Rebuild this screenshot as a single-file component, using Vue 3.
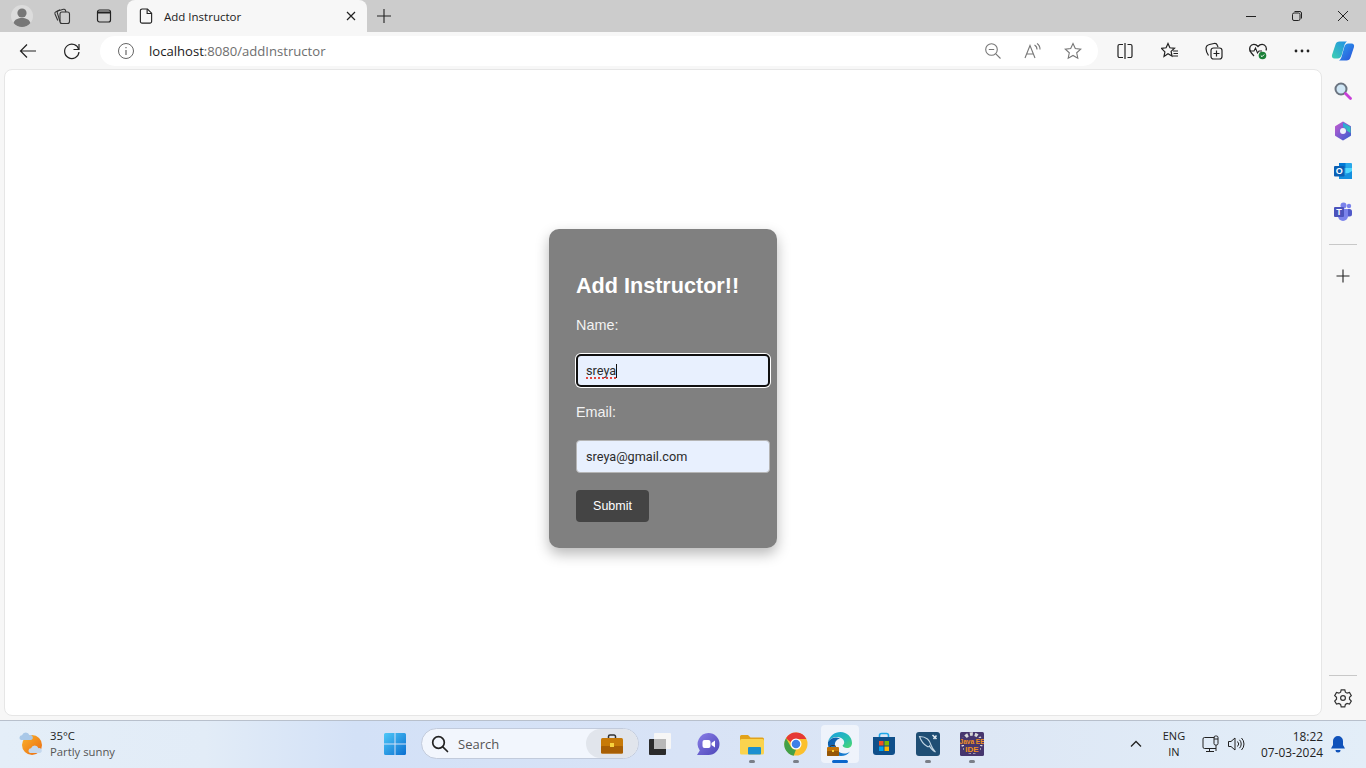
<template>
  <div class="desktop">
    <header class="tabstrip">
      <div class="slot avatar-slot">
        <svg width="24" height="24" viewBox="0 0 24 24">
          <circle cx="12" cy="12" r="11" fill="#dcdcdc" />
          <circle cx="12" cy="9" r="4.6" fill="#777" />
          <path d="M3.6 19c1-3.600 4.400-5 8.400-5s7.400 1.400 8.400 5a11 11 0 0 1-16.800 0z" fill="#777" />
        </svg>
      </div>
      <div class="slot">
        <svg width="20" height="20" viewBox="0 0 20 20" fill="none" stroke="#333" stroke-width="1.100">
          <rect x="8" y="6" width="9.500" height="11.500" rx="2" />
          <path d="M8 15.500 5.300 6.800c-.3-1 .2-1.800 1.200-2.100L11.500 3.300c.9-.2 1.600.2 1.900 1L14 6" />
          <path d="M5.800 14.500 3 8c-.4-1 0-1.800.9-2.200L8 3.800" />
        </svg>
      </div>
      <div class="slot tabs-toggle">
        <svg width="20" height="20" viewBox="0 0 20 20" fill="none" stroke="#222" stroke-width="1.200">
          <rect x="3.500" y="4" width="13" height="12" rx="2" />
          <path d="M3.500 6.500h13" stroke-width="2" />
        </svg>
      </div>
      <div class="tab">
        <svg width="18" height="18" viewBox="0 0 16 16" fill="none" stroke="#222" stroke-width="1">
          <path d="M4.500 1.800h4.800L13 5.500v7.300a1.500 1.500 0 0 1-1.500 1.500h-7A1.500 1.500 0 0 1 3 12.800V3.300a1.500 1.500 0 0 1 1.500-1.500z" />
          <path d="M9 2v3.800h4" />
        </svg>
        <span class="tab-title">Add Instructor</span>
        <svg class="tab-close" width="12" height="12" viewBox="0 0 12 12" stroke="#222" stroke-width="1.200">
          <path d="M2 2l8 8M10 2l-8 8" />
        </svg>
      </div>
      <div class="slot new-tab">
        <svg width="16" height="16" viewBox="0 0 16 16" stroke="#222" stroke-width="1.100">
          <path d="M8 1v14M1 8h14" />
        </svg>
      </div>
      <div class="window-buttons">
        <div class="win-btn">
          <svg width="12" height="12" viewBox="0 0 12 12" stroke="#222"><path d="M1 6.500h10" /></svg>
        </div>
        <div class="win-btn">
          <svg width="12" height="12" viewBox="0 0 12 12" fill="none" stroke="#222">
            <rect x="1.500" y="3" width="7.500" height="7.500" rx="1.500" />
            <path d="M3.500 1.500h5.500a1.800 1.800 0 0 1 1.500 1.500v5.500" />
          </svg>
        </div>
        <div class="win-btn">
          <svg width="12" height="12" viewBox="0 0 12 12" stroke="#222"><path d="M1 1l10 10M11 1L1 11" /></svg>
        </div>
      </div>
    </header>

    <nav class="toolbar">
      <div class="tool">
        <svg width="20" height="20" viewBox="0 0 20 20" fill="none" stroke="#222" stroke-width="1.200">
          <path d="M2.500 10h15.500M9 3.500 2.500 10 9 16.500" />
        </svg>
      </div>
      <div class="tool">
        <svg width="20" height="20" viewBox="0 0 20 20" fill="none" stroke="#222" stroke-width="1.200">
          <path d="M16.800 8.500A7.200 7.200 0 1 0 17 11" />
          <path d="M17 3v5.500h-5.500" />
        </svg>
      </div>
      <div class="address">
        <svg class="info" width="18" height="18" viewBox="0 0 18 18" fill="none" stroke="#666" stroke-width="1">
          <circle cx="9" cy="9" r="7.500" />
          <path d="M9 8v5M9 5v1.300" stroke-width="1.200" />
        </svg>
        <span class="url"><b>localhost</b>:8080/addInstructor</span>
        <div class="address-tools">
          <div class="addr-tool">
            <svg width="18" height="18" viewBox="0 0 18 18" fill="none" stroke="#777" stroke-width="1.100">
              <circle cx="7.500" cy="7.500" r="5.800" />
              <path d="M4.800 7.500h5.400M11.800 11.800 16.500 16.500" />
            </svg>
          </div>
          <div class="addr-tool">
            <svg width="18" height="18" viewBox="0 0 18 18" fill="none" stroke="#777" stroke-width="1.100">
              <path d="M1 16 6 3.500 11 16M2.800 12h6.400" />
              <path d="M10.500 3a5 5 0 0 1 2.500 4.500M13 1.500a7 7 0 0 1 3 6" />
            </svg>
          </div>
          <div class="addr-tool">
            <svg width="18" height="18" viewBox="0 0 18 18" fill="none" stroke="#777" stroke-width="1.100">
              <path d="M9 1.500l2.300 5 5.400.6-4 3.700 1.100 5.400L9 13.500l-4.800 2.700 1.100-5.400-4-3.700 5.400-.6z" />
            </svg>
          </div>
        </div>
      </div>
      <div class="tool split">
        <svg width="18" height="18" viewBox="0 0 18 18" fill="none" stroke="#222" stroke-width="1.200">
          <path d="M7 2.500H3.500A1.500 1.500 0 0 0 2 4v10a1.500 1.500 0 0 0 1.500 1.500H7M9 1v16M11.500 2.500h3A1.500 1.500 0 0 1 16 4v10a1.500 1.500 0 0 1-1.500 1.500h-3" />
        </svg>
      </div>
      <div class="tool favorites">
        <svg width="18" height="18" viewBox="0 0 18 18" fill="none" stroke="#222" stroke-width="1.200">
          <path d="M7 1.500l1.900 4.300 4.600.5-3.400 3.100.9 4.600L7 11.800l-4 2.700.9-4.600L.5 6.300l4.600-.5z" />
          <path d="M12 9h5M12.500 11.500H17M11.500 14H17" />
        </svg>
      </div>
      <div class="tool">
        <svg width="18" height="18" viewBox="0 0 18 18" fill="none" stroke="#222" stroke-width="1.200">
          <path d="M3.500 13.500C1.800 11 1 8.500 1 6.500 1 4.500 2.300 3 4.500 2.500L9 1.500c1.500-.3 2.800.3 3.300 1.800L13 5" />
          <rect x="6" y="6" width="11" height="11" rx="2.500" />
          <path d="M11.500 8.500v6M8.500 11.500h6" />
        </svg>
      </div>
      <div class="tool">
        <svg width="20" height="20" viewBox="0 0 20 20" fill="none">
          <path d="M6 15 3 11.500C1.500 9.500 1.200 7.500 2.200 5.500 3.700 3 7.500 2.500 10 5.500c2.500-3 6.300-2.500 7.800 0 .7 1.400.7 2.800.2 4" stroke="#222" stroke-width="1.200" />
          <path d="M1.500 10H6l1.500-3 2 5 1.500-2h3" stroke="#222" stroke-width="1.100" />
          <circle cx="14.500" cy="14.500" r="3.800" fill="#1a7f37" />
          <path d="M12.800 14.500l1.200 1.200 2.200-2.200" stroke="#fff" stroke-width="1" />
        </svg>
      </div>
      <div class="tool">
        <svg width="16" height="4" viewBox="0 0 16 4" fill="#222">
          <circle cx="2" cy="2" r="1.400" /><circle cx="8" cy="2" r="1.400" /><circle cx="14" cy="2" r="1.400" />
        </svg>
      </div>
      <div class="copilot-slot">
        <svg width="24" height="24" viewBox="0 0 24 24">
          <defs>
            <linearGradient id="cpA" x1="0" y1="1" x2="1" y2="0">
              <stop offset="0" stop-color="#3fd0b0" />
              <stop offset="1" stop-color="#1f8fe6" />
            </linearGradient>
            <linearGradient id="cpB" x1="0" y1="0" x2="1" y2="1">
              <stop offset="0" stop-color="#2aa3f0" />
              <stop offset="1" stop-color="#2b4fd8" />
            </linearGradient>
          </defs>
          <path d="M8.500 2.500h7.500c-1.500 1-2.200 2.500-2.800 4.500l-2.500 9c-.6 2-1.900 3.400-4 3.400H3.500C1.500 19.400.5 18 1 16L4.500 5.500C5 3.500 6.500 2.500 8.500 2.500z" fill="url(#cpA)" />
          <path d="M15.500 21.500H8c1.500-1 2.200-2.500 2.800-4.500l2.500-9c.6-2 1.900-3.400 4-3.400h3.200c2 0 3 1.400 2.500 3.400L19.500 18.500c-.5 2-2 3-4 3z" fill="url(#cpB)" />
        </svg>
      </div>
    </nav>

    <div class="content-row">
      <main class="page">
        <section class="form-card">
          <h2>Add Instructor!!</h2>
          <form @submit.prevent>
            <label for="name">Name:</label>
            <div class="field focused">
              <input id="name" v-model="name" type="text" />
              <i class="squiggle"></i>
              <i class="caret"></i>
            </div>
            <label for="email">Email:</label>
            <div class="field">
              <input id="email" v-model="email" type="email" />
            </div>
            <button type="submit">Submit</button>
          </form>
        </section>
      </main>
      <aside class="sidebar">
        <div class="side-item">
          <svg width="20" height="20" viewBox="0 0 20 20" fill="none">
            <circle cx="8" cy="8" r="5.500" fill="#cfe6f5" stroke="#6b7480" stroke-width="2" />
            <path d="M12.500 12.500 17.500 17.500" stroke="#c83fd8" stroke-width="2.800" stroke-linecap="round" />
          </svg>
        </div>
        <div class="side-item">
          <svg width="20" height="20" viewBox="0 0 20 20">
            <defs>
              <linearGradient id="msA" x1="0" y1="0" x2="1" y2="1">
                <stop offset="0" stop-color="#c05ad0" />
                <stop offset="1" stop-color="#3a5fd0" />
              </linearGradient>
              <linearGradient id="msB" x1="0" y1="0" x2="1" y2="1">
                <stop offset="0" stop-color="#2a9fe0" />
                <stop offset="1" stop-color="#35d0b0" />
              </linearGradient>
            </defs>
            <path d="M10 1.500 17 5.800v8.400L10 18.500 3 14.200V5.800z" fill="url(#msA)" stroke="url(#msA)" stroke-linejoin="round" stroke-width="2" />
            <path d="M10 1.500 17.500 6v6l-4-2.500V8L10 6z" fill="url(#msB)" />
            <circle cx="10" cy="10" r="3" fill="#eef2fc" />
          </svg>
        </div>
        <div class="side-item">
          <svg width="20" height="20" viewBox="0 0 20 20">
            <rect x="6" y="2" width="13" height="16" rx="1" fill="#28a8ea" />
            <rect x="6" y="2" width="6.500" height="5" fill="#0078d4" />
            <rect x="12.500" y="7" width="6.500" height="5" fill="#50d9ff" />
            <path d="M6 11l6.500 3 6.500-4v8H6z" fill="#1490df" />
            <rect x="1" y="5" width="10.500" height="10.500" rx="1" fill="#0a5fb4" />
            <text x="6.200" y="13.400" class="svg-letter" text-anchor="middle" fill="#fff" font-size="9">O</text>
          </svg>
        </div>
        <div class="side-item">
          <svg width="20" height="20" viewBox="0 0 20 20">
            <circle cx="16" cy="5" r="2.200" fill="#7b83eb" />
            <rect x="12.500" y="8" width="6.500" height="7.500" rx="2.500" fill="#5059c9" />
            <circle cx="10.500" cy="4.500" r="3" fill="#7b83eb" />
            <path d="M5 8h10v7a5 5 0 0 1-10 0z" fill="#7b83eb" />
            <rect x="1" y="6" width="10" height="10" rx="1" fill="#4b53bc" />
            <text x="6" y="14.200" class="svg-letter" text-anchor="middle" fill="#fff" font-size="9">T</text>
          </svg>
        </div>
        <hr class="side-rule first" />
        <div class="side-item plus">
          <svg width="14" height="14" viewBox="0 0 14 14" stroke="#222" stroke-width="1.100">
            <path d="M7 .5v13M.5 7h13" />
          </svg>
        </div>
        <hr class="side-rule last" />
        <div class="side-item">
          <svg width="20" height="20" viewBox="0 0 20 20" fill="none" stroke="#333" stroke-width="1.200">
            <path d="M8.200 2h3.600l.6 2.400 1.700 1 2.400-.7 1.800 3.100-1.800 1.700v2l1.800 1.700-1.800 3.100-2.400-.7-1.700 1-.6 2.400H8.200l-.6-2.400-1.700-1-2.400.7-1.800-3.100 1.800-1.700v-2L1.700 7.800l1.800-3.100 2.400.7 1.700-1z" transform="translate(0 -.2)" />
            <circle cx="10" cy="10" r="2.400" />
          </svg>
        </div>
      </aside>
    </div>

    <footer class="taskbar">
      <div class="weather">
        <svg width="28" height="28" viewBox="0 0 28 28">
          <defs>
            <linearGradient id="sun" x1="0" y1="0" x2="1" y2="1">
              <stop offset="0" stop-color="#fbb32a" />
              <stop offset="1" stop-color="#ea6a12" />
            </linearGradient>
          </defs>
          <circle cx="15" cy="15" r="10" fill="url(#sun)" />
          <path d="M4 10a2.500 2.500 0 0 1 1-4.800 4 4 0 0 1 7.500 0A2.500 2.500 0 0 1 14 10z" fill="#a9c8e8" />
          <path d="M13 23a2.500 2.500 0 0 1 1-4.800 4 4 0 0 1 7.500 0A2.500 2.500 0 0 1 23 23z" fill="#c4d8ee" />
        </svg>
        <div class="weather-text">
          <span class="temp">35°C</span>
          <span class="sky">Partly sunny</span>
        </div>
      </div>

      <div class="task-slot">
        <svg width="24" height="24" viewBox="0 0 24 24">
          <defs>
            <linearGradient id="win" x1="0" y1="0" x2="1" y2="1">
              <stop offset="0" stop-color="#4fc8f8" />
              <stop offset="1" stop-color="#0a6fd0" />
            </linearGradient>
          </defs>
          <path d="M1 2.500A1.500 1.500 0 0 1 2.500 1h9v10.500H1zM12.500 1h9A1.500 1.500 0 0 1 23 2.500v9H12.500zM1 12.500h10.500V23h-9A1.500 1.500 0 0 1 1 21.500zM12.500 12.500H23v9a1.500 1.500 0 0 1-1.500 1.500h-9z" fill="url(#win)" />
        </svg>
      </div>
      <div class="searchbox">
        <svg width="20" height="20" viewBox="0 0 20 20" fill="none" stroke="#222" stroke-width="1.700">
          <circle cx="8.500" cy="8.500" r="5.800" />
          <path d="M12.800 12.800 17.500 17.500" stroke-linecap="round" />
        </svg>
        <span>Search</span>
        <div class="search-badge">
          <svg width="24" height="20" viewBox="0 0 24 20">
            <path d="M8.500 5V2.500A1.500 1.500 0 0 1 10 1h4a1.500 1.500 0 0 1 1.500 1.500V5" fill="none" stroke="#333" stroke-width="1.500" />
            <rect x="1" y="4" width="22" height="15.500" rx="1.500" fill="#c77a08" />
            <rect x="1" y="12" width="22" height="7.500" rx="1" fill="#a85f05" />
            <rect x="10" y="9" width="4" height="4" fill="#f7d23e" />
          </svg>
        </div>
      </div>
      <div class="task-slot taskview">
        <svg width="24" height="24" viewBox="0 0 24 24">
          <rect x="6" y="1" width="17" height="16" rx="1" fill="#f6f6f6" />
          <rect x="1" y="7" width="17" height="16" rx="1" fill="#2b2b2b" />
          <rect x="6" y="7" width="12" height="10" fill="#b8b8b8" />
        </svg>
      </div>
      <div class="task-slot meet">
        <svg width="24" height="24" viewBox="0 0 24 24">
          <defs>
            <linearGradient id="meet" x1="0" y1="0" x2="1" y2="1">
              <stop offset="0" stop-color="#8a7fe8" />
              <stop offset="1" stop-color="#4d46b8" />
            </linearGradient>
          </defs>
          <path d="M12.500 1a11 11 0 0 1 0 22H1l2.800-4.500A11 11 0 0 1 12.500 1z" fill="url(#meet)" />
          <rect x="6.500" y="8" width="8" height="8" rx="2" fill="#fff" />
          <path d="M15.500 11 19 8.500v7L15.500 13z" fill="#fff" />
        </svg>
      </div>
      <div class="task-slot running">
        <svg width="24" height="24" viewBox="0 0 24 24">
          <path d="M0 4.500A1.500 1.500 0 0 1 1.500 3h6.500l2.500 2.500H22.500A1.500 1.500 0 0 1 24 7v3H0z" fill="#e2a21a" />
          <rect x="0" y="7" width="24" height="15.500" rx="1.500" fill="#fad34e" />
          <rect x="8" y="15" width="13" height="7.500" rx="1" fill="#1b8fd0" />
        </svg>
      </div>
      <div class="task-slot running">
        <svg width="24" height="24" viewBox="0 0 24 24">
          <circle cx="12" cy="12" r="11.500" fill="#fbc02d" />
          <path d="M2 6.200A11.500 11.500 0 0 1 22.400 7H12a5.200 5.200 0 0 0-5 3.600z" fill="#e53935" />
          <path d="M2 6.200 7 15a5.500 5.500 0 0 0 5 2.500l-2.300 6.200A11.500 11.500 0 0 1 2 6.200z" fill="#43a047" />
          <circle cx="12" cy="12" r="5.500" fill="#fff" />
          <circle cx="12" cy="12" r="4.300" fill="#3f7fe8" />
        </svg>
      </div>
      <div class="task-slot active">
        <svg width="26" height="26" viewBox="0 0 26 26">
          <defs>
            <linearGradient id="edgeA" x1="0" y1="0" x2="1" y2="1">
              <stop offset="0" stop-color="#1b9de2" />
              <stop offset="0.6" stop-color="#26c0b0" />
              <stop offset="1" stop-color="#50d868" />
            </linearGradient>
            <linearGradient id="edgeB" x1="0" y1="0" x2="1" y2="1">
              <stop offset="0" stop-color="#0c59a4" />
              <stop offset="1" stop-color="#1b84d8" />
            </linearGradient>
          </defs>
          <path d="M1 11C2.500 5 7.500 1 13.500 1 20 1 25 6 25 12c0 3-2 5-5 5-2.500 0-4-1-4.500-2.500 2-1 2.500-4.500 0-6.500C11 4.500 4 6 1 11z" fill="url(#edgeA)" />
          <path d="M1 11c3-4.500 8.500-5.500 12-3.500-4 1-5.500 4-5 7.500.5 4 4 7 9 7.500 2 .2 4-.5 6-2-2 3-5.500 4.500-9 4.500C6 25 0 18 1 11z" fill="url(#edgeB)" />
          <path d="M3.500 17v-1.500a1 1 0 0 1 1-1h3a1 1 0 0 1 1 1V17" fill="none" stroke="#333" stroke-width="1" />
          <rect x="0" y="16" width="12" height="9" rx="1" fill="#c07208" />
          <rect x="0" y="20" width="12" height="5" rx="1" fill="#965706" />
          <rect x="5" y="19" width="2" height="2" fill="#f7d23e" />
        </svg>
      </div>
      <div class="task-slot">
        <svg width="24" height="24" viewBox="0 0 24 24">
          <path d="M7.500 6V3.500A2 2 0 0 1 9.500 1.500h5a2 2 0 0 1 2 2V6" fill="none" stroke="#1ea7e8" stroke-width="1.600" />
          <path d="M1 5h22v15a3 3 0 0 1-3 3H4a3 3 0 0 1-3-3z" fill="#0f4f8a" />
          <rect x="7" y="9" width="4.500" height="4.500" fill="#f25022" />
          <rect x="12.500" y="9" width="4.500" height="4.500" fill="#7fba00" />
          <rect x="7" y="14.500" width="4.500" height="4.500" fill="#00a4ef" />
          <rect x="12.500" y="14.500" width="4.500" height="4.500" fill="#ffb900" />
        </svg>
      </div>
      <div class="task-slot running">
        <svg width="24" height="24" viewBox="0 0 24 24">
          <rect width="24" height="24" rx="3" fill="#1f4e74" />
          <path d="M3.500 4.500c3.500 0 6 .8 8 2.500 2 1.700 3 4 3.700 6.500.6 2 2 4 4.300 6.500-2.700-1.500-5-3.500-6-6-.5 1-1.500 1-2.500.3C8 12.500 5 9 3.500 4.500z" fill="none" stroke="#c0d4e2" stroke-width="1.100" />
          <path d="M16.500 3l4 4M20.500 3.500 17.500 7" stroke="#dfe9f0" stroke-width="1.500" />
        </svg>
      </div>
      <div class="task-slot running">
        <svg width="24" height="24" viewBox="0 0 24 24">
          <rect width="24" height="24" rx="1.500" fill="#46366e" />
          <circle cx="12" cy="11" r="9" fill="none" stroke="#d8d8d8" stroke-width="3.500" stroke-dasharray="3 2" />
          <rect x="0" y="6" width="24" height="7" fill="#46366e" />
          <rect x="4" y="13" width="16" height="8" fill="#46366e" />
          <text x="12" y="11.800" class="svg-tiny" text-anchor="middle" fill="#f09020" font-size="6.500">Java EE</text>
          <text x="12" y="19.500" class="svg-tiny" text-anchor="middle" fill="#f09020" font-size="8">IDE</text>
        </svg>
      </div>

      <div class="tray">
        <svg class="chevron" width="12" height="8" viewBox="0 0 12 8" fill="none" stroke="#222" stroke-width="1.300">
          <path d="M1 6.500 6 1.500l5 5" />
        </svg>
        <div class="lang"><span>ENG</span><span>IN</span></div>
        <svg class="net" width="18" height="18" viewBox="0 0 18 18" fill="none" stroke="#222" stroke-width="1">
          <path d="M12.500 2.500H2.500A1.500 1.500 0 0 0 1 4v8a1.500 1.500 0 0 0 1.500 1.500H14M7.500 13.500v3M4 16.500h8" />
          <rect x="12" y="1" width="4" height="9" rx="1.500" />
          <path d="M14 10v6M12 4h4" />
        </svg>
        <svg class="vol" width="18" height="18" viewBox="0 0 18 18" fill="none" stroke="#222" stroke-width="1">
          <path d="M1.500 6.500h2.500L8 3v12l-4-3.500H1.500z" />
          <path d="M10.500 6.500a3.500 3.500 0 0 1 0 5M12.500 4.800a6 6 0 0 1 0 8.400M14.500 3a8.500 8.500 0 0 1 0 12" />
        </svg>
        <div class="clock"><span>18:22</span><span>07-03-2024</span></div>
        <svg class="bell" width="16" height="18" viewBox="0 0 16 18" fill="#0f52ba">
          <path d="M8 1a5 5 0 0 1 5 5v4l2 3.500H1L3 10V6a5 5 0 0 1 5-5z" />
          <path d="M5.500 15h5a2.500 2.500 0 0 1-5 0z" />
        </svg>
      </div>
    </footer>
  </div>
</template>

<script setup>
import { ref } from 'vue'

const name = ref('sreya')
const email = ref('sreya@gmail.com')
</script>

<style scoped>
.desktop {
  width: 1366px;
  height: 768px;
  display: flex;
  flex-direction: column;
  overflow: hidden;
  background: #f7f7f7;
  font-family: "Open Sans", "Liberation Sans", sans-serif;
  color: #222;
}

svg {
  display: block;
  flex: none;
}

.svg-letter {
  font-family: "Liberation Sans", sans-serif;
  font-weight: 700;
}

.svg-tiny {
  font-family: "Liberation Sans", sans-serif;
  font-weight: 700;
}

/* browser chrome */
.tabstrip {
  height: 32px;
  flex: none;
  display: flex;
  align-items: center;
  padding-left: 2px;
  background: #cccccc;
}

.slot {
  width: 40px;
  height: 32px;
  display: flex;
  align-items: center;
  justify-content: center;
}

.tabs-toggle {
  margin-left: 2px;
}

.tab {
  width: 240px;
  height: 32px;
  margin-left: 3px;
  padding: 0 10px;
  box-sizing: border-box;
  display: flex;
  align-items: center;
  background: #f7f7f7;
  border-radius: 8px 8px 0 0;
}

.tab-title {
  margin-left: 9px;
  font-size: 11.500px;
  white-space: nowrap;
}

.tab-close {
  margin-left: auto;
}

.new-tab {
  width: 34px;
}

.window-buttons {
  margin-left: auto;
  display: flex;
}

.win-btn {
  width: 46px;
  height: 32px;
  display: flex;
  align-items: center;
  justify-content: center;
}

.toolbar {
  height: 37px;
  flex: none;
  display: flex;
  align-items: center;
  padding-left: 6px;
  box-sizing: border-box;
}

.tool {
  width: 44px;
  height: 37px;
  display: flex;
  align-items: center;
  justify-content: center;
}

.address {
  width: 998px;
  height: 30px;
  margin-left: 6px;
  padding-left: 17px;
  box-sizing: border-box;
  display: flex;
  align-items: center;
  background: #fff;
  border-radius: 15px;
}

.url {
  margin-left: 14px;
  font-size: 13.100px;
  color: #6e6e6e;
  white-space: nowrap;
}

.url b {
  font-weight: 400;
  color: #1a1a1a;
}

.address-tools {
  margin-left: auto;
  padding-right: 5px;
  display: flex;
}

.addr-tool {
  width: 40px;
  display: flex;
  justify-content: center;
}

.split {
  margin-left: 5px;
}

.favorites {
  margin-left: 1px;
}

.copilot-slot {
  width: 38px;
  display: flex;
  justify-content: center;
}

.content-row {
  flex: 1;
  min-height: 0;
  display: flex;
}

.page {
  width: 1318px;
  margin: 0 0 4px 4px;
  box-sizing: border-box;
  display: flex;
  align-items: center;
  justify-content: center;
  padding-bottom: 9px;
  background: #fff;
  border: 1px solid #e6e6e6;
  border-radius: 8px;
}

/* the form */
.form-card {
  width: 228px;
  height: 319px;
  padding: 27px;
  box-sizing: border-box;
  background: #808080;
  border-radius: 10px;
  box-shadow: 0 6px 14px rgba(0, 0, 0, 0.28);
  color: #fff;
  font-family: "Liberation Sans", Arial, sans-serif;
}

.form-card h2 {
  margin: 17px 0 0;
  font-size: 21.600px;
  font-weight: 700;
  line-height: 26px;
  white-space: nowrap;
}

.form-card label {
  display: block;
  margin-top: 18px;
  font-size: 14.400px;
  line-height: 17px;
  color: #f2f2f2;
}

.field {
  position: relative;
  width: 194px;
  margin-top: 20px;
}

.field input {
  display: block;
  width: 100%;
  height: 33px;
  padding: 0 9px;
  box-sizing: border-box;
  background: #e8f0fe;
  border: 1px solid #b5b5b5;
  border-radius: 4px;
  outline: none;
  color: #2b2b2b;
  font-family: Roboto, "Liberation Sans", sans-serif;
  font-size: 12.700px;
}

.field.focused input {
  padding: 0 8px;
  border: 2px solid #101010;
  box-shadow: 0 0 0 1px #fff;
  border-radius: 5px;
}

.squiggle {
  position: absolute;
  left: 10px;
  top: 23px;
  width: 30px;
  height: 2px;
  background: repeating-linear-gradient(90deg, #e2453c 0 2px, transparent 2px 4px);
}

.caret {
  position: absolute;
  left: 40px;
  top: 10px;
  width: 1px;
  height: 14px;
  background: #111;
}

.field + label {
  margin-top: 17px;
}

.field + label + .field {
  margin-top: 19px;
}

.form-card button {
  display: block;
  width: 73px;
  height: 32px;
  margin-top: 17px;
  padding: 0;
  background: #444444;
  border: none;
  border-radius: 4px;
  color: #fff;
  font-family: "Liberation Sans", Arial, sans-serif;
  font-size: 12.500px;
  font-weight: 500;
}

/* edge sidebar */
.sidebar {
  flex: 1;
  display: flex;
  flex-direction: column;
  align-items: center;
  padding: 2px 2px 2px 0;
  box-sizing: border-box;
}

.side-item {
  width: 40px;
  height: 40px;
  display: flex;
  align-items: center;
  justify-content: center;
}

.side-rule {
  width: 28px;
  height: 1px;
  margin: 0;
  border: none;
  background: #c8c8c8;
}

.side-rule.first {
  margin-top: 13px;
}

.side-item.plus {
  margin-top: 11px;
}

.side-rule.last {
  margin-top: auto;
  margin-bottom: 2px;
}

/* windows taskbar */
.taskbar {
  height: 48px;
  flex: none;
  display: flex;
  align-items: center;
  padding-bottom: 2px;
  box-sizing: border-box;
  border-top: 1px solid #b8c0cc;
  background: linear-gradient(90deg, #e4eef8 0%, #e2ecf7 15%, #d3e1f7 26%, #d8e3f6 50%, #dde7f5 72%, #e3eef8 100%);
}

.weather {
  width: 373px;
  padding-left: 17px;
  box-sizing: border-box;
  display: flex;
  align-items: center;
  gap: 5px;
}

.weather-text {
  display: flex;
  flex-direction: column;
  font-size: 11.300px;
  line-height: 16px;
}

.sky {
  color: #555;
}

.task-slot {
  position: relative;
  width: 44px;
  height: 38px;
  display: flex;
  align-items: center;
  justify-content: center;
}

.searchbox {
  width: 218px;
  height: 31px;
  margin-left: 4px;
  padding-left: 8px;
  box-sizing: border-box;
  display: flex;
  align-items: center;
  background: #f2f6fd;
  border: 1px solid #c2cbdc;
  border-radius: 16px;
  font-size: 13px;
  color: #555;
}

.searchbox span {
  margin-left: 8px;
}

.search-badge {
  width: 52px;
  height: 100%;
  margin-left: auto;
  display: flex;
  align-items: center;
  justify-content: center;
  background: #e1e5ec;
  border-radius: 16px;
}

.taskview {
  margin-left: -1px;
}

.meet {
  margin-left: 4px;
}

.running::after,
.active::after {
  content: "";
  position: absolute;
  left: 50%;
  bottom: 0;
  width: 6px;
  height: 3px;
  margin-left: -3px;
  background: #7a7f88;
  border-radius: 2px;
}

.active {
  background: rgba(255, 255, 255, 0.55);
  border-radius: 4px;
  width: 38px;
  margin: 0 3px;
}

.active::after {
  width: 16px;
  margin-left: -8px;
  background: #0a66cc;
}

.tray {
  flex: 1;
  display: flex;
  align-items: center;
  justify-content: flex-end;
  padding-right: 37px;
  font-size: 11px;
}

.lang {
  width: 30px;
  margin-left: 17px;
  display: flex;
  flex-direction: column;
  align-items: center;
  line-height: 16px;
}

.net {
  margin-left: 13px;
}

.vol {
  margin-left: 7px;
}

.clock {
  margin-left: 16px;
  display: flex;
  flex-direction: column;
  align-items: flex-end;
  font-size: 11.900px;
  line-height: 16px;
}

.bell {
  margin: 0 -17px 0 7px;
}
</style>
